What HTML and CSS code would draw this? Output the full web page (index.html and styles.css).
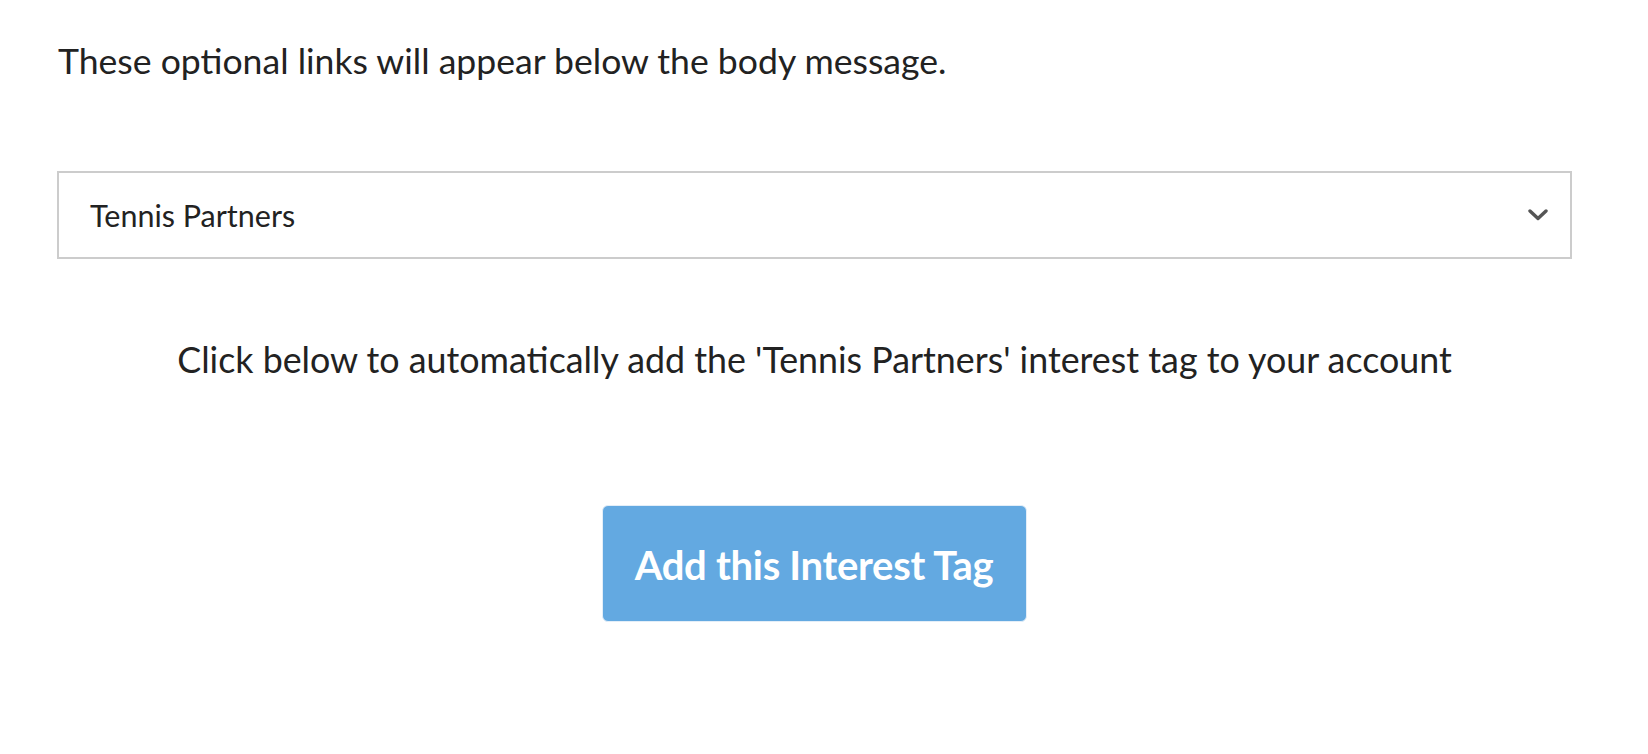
FILE: index.html
```html
<!DOCTYPE html>
<html lang="en">
<head>
<meta charset="utf-8">
<title>Interest Tag</title>
<link rel="stylesheet" href="styles.css">
</head>
<body>
<main class="page">
  <p class="intro">These optional links will appear below the body message.</p>
  <div class="select" role="combobox" aria-expanded="false">
    <span class="select-value">Tennis Partners</span>
    <svg class="chevron" width="20" height="12" viewBox="0 0 20 12" aria-hidden="true">
      <path d="M2 2 L10 9.5 L18 2" fill="none" stroke="#555" stroke-width="3.4" stroke-linecap="round" stroke-linejoin="round"/>
    </svg>
  </div>
  <p class="note">Click below to automatically add the 'Tennis Partners' interest tag to your account</p>
  <div class="actions">
    <button class="btn" type="button">Add this Interest Tag</button>
  </div>
</main>
</body>
</html>
```

FILE: styles.css
```css
html, body {
  margin: 0;
  padding: 0;
  background: #ffffff;
}

body {
  font-family: Lato, "Liberation Sans", sans-serif;
  color: #222222;
}

.page {
  width: 1515px;
  padding-left: 57px;
  box-sizing: content-box;
}

.intro {
  margin: 0;
  padding: 36px 0 0 1px;
  font-size: 35.6px;
  line-height: 50px;
}

.select {
  margin-top: 85px;
  height: 88px;
  box-sizing: border-box;
  border: 2px solid #cccccc;
  display: flex;
  align-items: center;
  justify-content: space-between;
  padding: 0 22px 0 31px;
  font-size: 30.5px;
  color: #222222;
}

.select-value {
  line-height: 36px;
}

.chevron {
  display: block;
}

.note {
  margin: 76px 0 0;
  text-align: center;
  font-size: 35.8px;
  line-height: 50px;
}

.actions {
  display: flex;
  justify-content: center;
  margin-top: 120px;
}

.btn {
  height: 117px;
  padding: 2px 33px 0 32px;
  border: 1px solid #e3eef8;
  border-radius: 6px;
  background: #63a9e1;
  color: #ffffff;
  font-family: Lato, "Liberation Sans", sans-serif;
  font-weight: 700;
  font-size: 40px;
  letter-spacing: -0.3px;
  cursor: pointer;
}
```
